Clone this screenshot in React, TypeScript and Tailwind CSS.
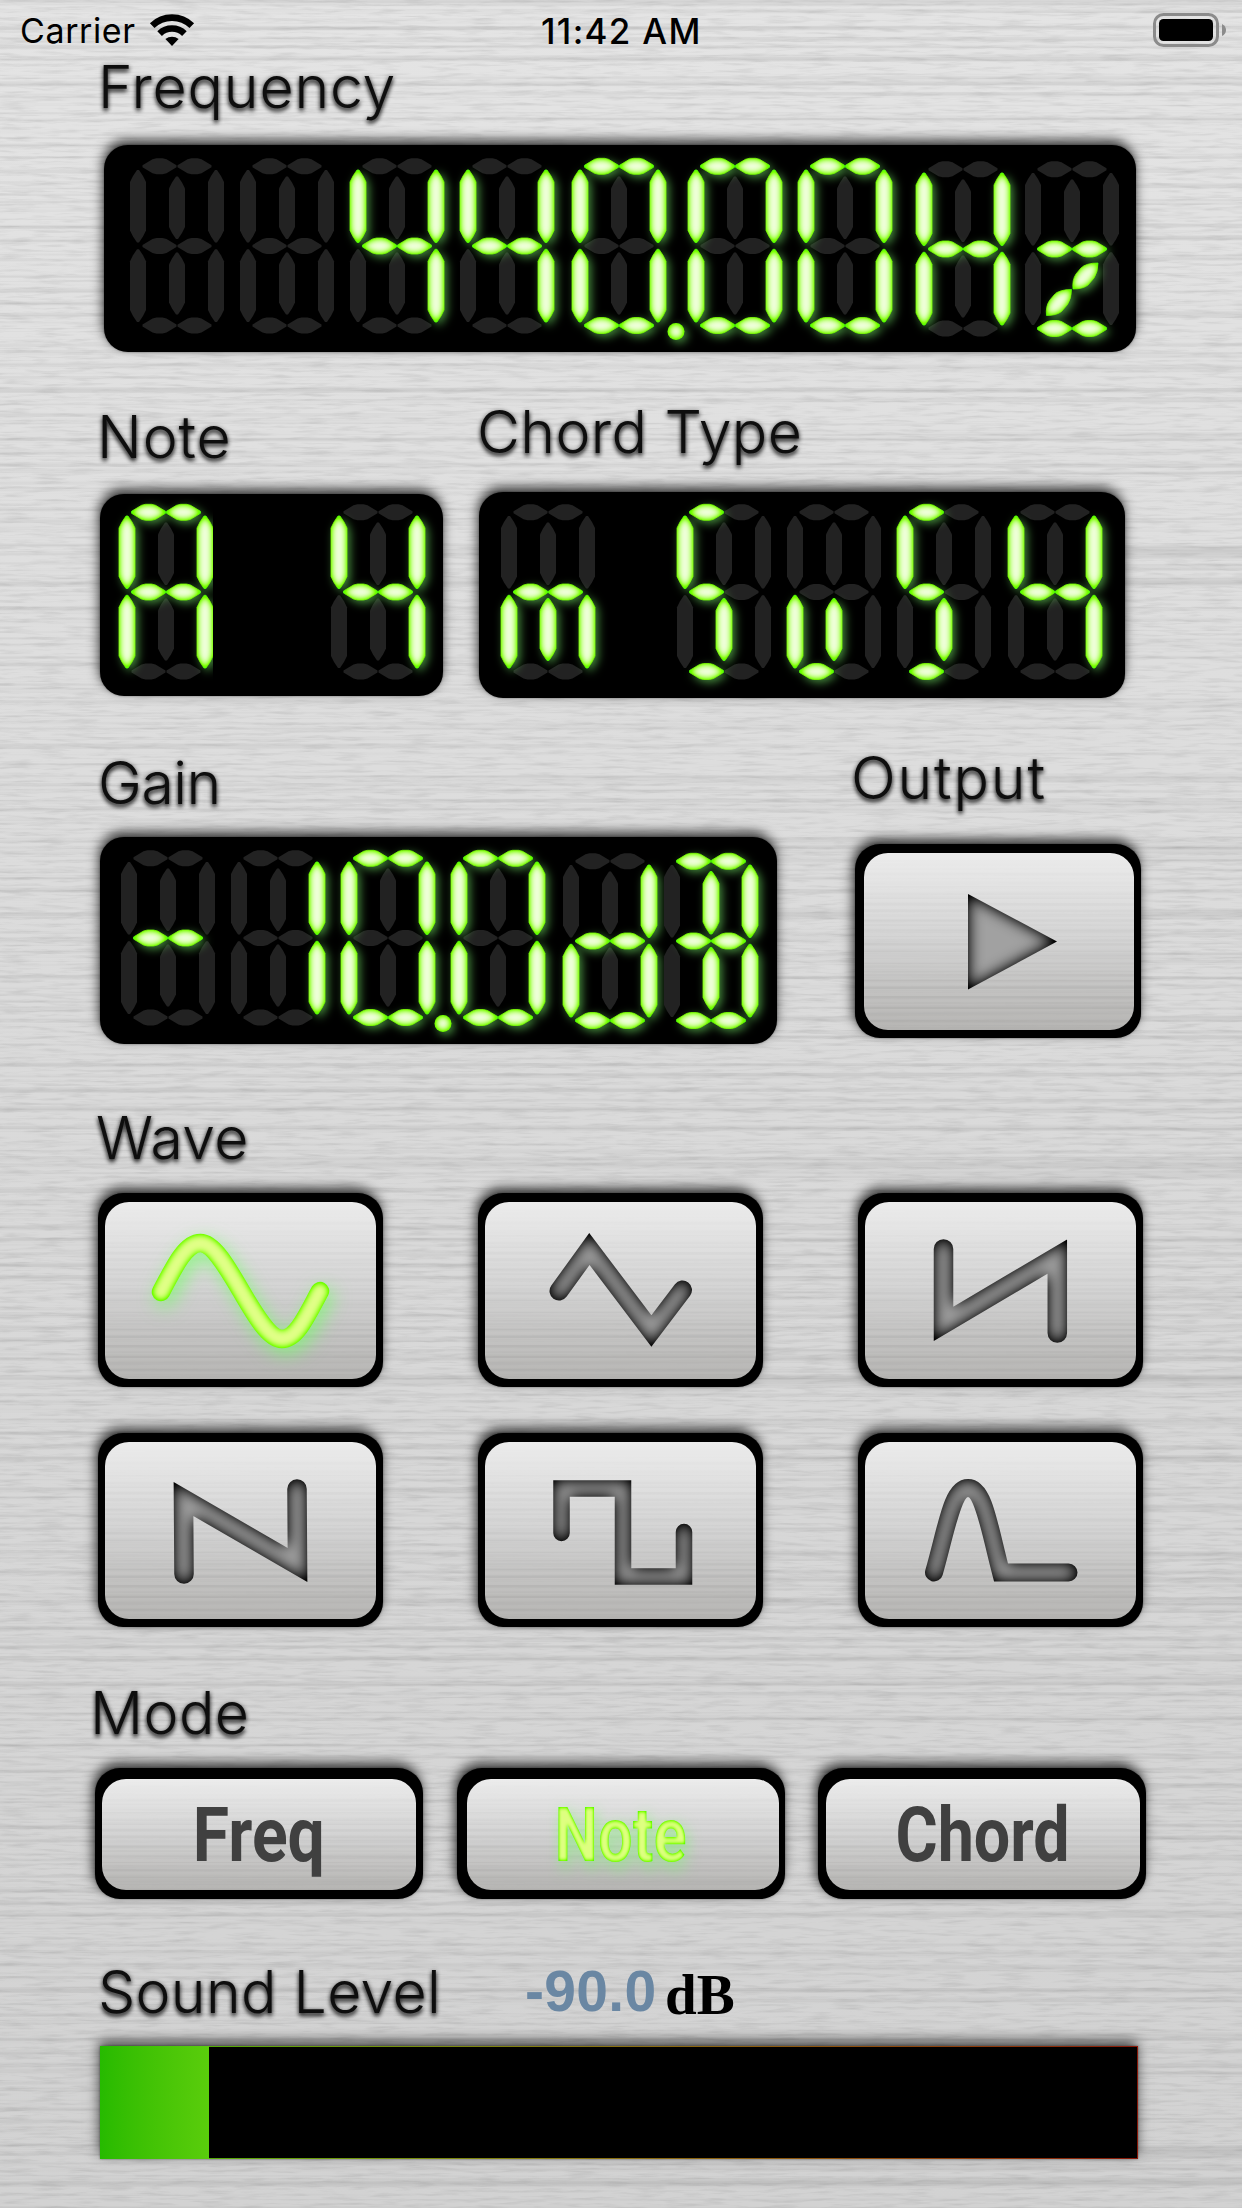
import React from "react";

type Seg =
  | "a1" | "a2" | "f" | "b" | "i" | "g1" | "g2" | "e" | "c" | "l" | "d1" | "d2" | "z1" | "z2";

const vert = (cx: number, y0: number, y1: number) =>
  `M${cx - 1} ${y0} L${cx + 1} ${y0} L${cx + 5} ${y0 + 6} L${cx + 8} ${y0 + 12} L${cx + 8} ${y1 - 12} L${cx + 5} ${y1 - 6} L${cx + 1} ${y1} L${cx - 1} ${y1} L${cx - 5} ${y1 - 6} L${cx - 8} ${y1 - 12} L${cx - 8} ${y0 + 12} L${cx - 5} ${y0 + 6} Z`;

const horiz = (x0: number, cy: number) =>
  `M${x0} ${cy - 1} L${x0 + 10} ${cy - 7} L${x0 + 14} ${cy - 8} L${x0 + 20} ${cy - 8} L${x0 + 24} ${cy - 7} L${x0 + 34} ${cy - 1} L${x0 + 34} ${cy + 1} L${x0 + 24} ${cy + 7} L${x0 + 20} ${cy + 8} L${x0 + 14} ${cy + 8} L${x0 + 10} ${cy + 7} L${x0} ${cy + 1} Z`;

const diag = (x: number, y: number) =>
  `M${x} ${y} Q${x - 1} ${y - 9} ${x + 3} ${y - 15} L${x + 8} ${y - 21} Q${x + 13} ${y - 26} ${x + 25} ${y - 26} Q${x + 25} ${y - 17} ${x + 21} ${y - 11} L${x + 15} ${y - 4} Q${x + 10} ${y} ${x} ${y} Z`;

const SHAPES: Record<Seg, string> = {
  a1: horiz(12.5, 8.3),
  a2: horiz(47.5, 8.3),
  f: vert(8, 12, 84.5),
  b: vert(86, 12, 84.5),
  i: vert(47, 18.5, 81),
  g1: horiz(12.5, 88),
  g2: horiz(47.5, 88),
  e: vert(8, 91.3, 164),
  c: vert(86, 91.3, 164),
  l: vert(47, 94.5, 156.5),
  d1: horiz(12.5, 167.5),
  d2: horiz(47.5, 167.5),
  z1: diag(48, 128),
  z2: diag(21.5, 154.5),
};

const GHOST: Seg[] = ["a1", "a2", "f", "b", "i", "g1", "g2", "e", "c", "l", "d1", "d2"];

const GLYPHS: Record<string, Seg[]> = {
  " ": [],
  "-": ["g1", "g2"],
  "0": ["a1", "a2", "f", "b", "e", "c", "d1", "d2"],
  "1": ["b", "c"],
  "4": ["f", "b", "g1", "g2", "c"],
  A: ["a1", "a2", "f", "b", "g1", "g2", "e", "c"],
  B: ["a1", "a2", "i", "b", "g1", "g2", "l", "c", "d1", "d2"],
  H: ["f", "b", "g1", "g2", "e", "c"],
  S: ["a1", "f", "g1", "l", "d1"],
  d: ["b", "g1", "g2", "e", "c", "d1", "d2"],
  m: ["g1", "g2", "e", "l", "c"],
  u: ["e", "l", "d1"],
  z: ["g1", "g2", "z1", "z2", "d1", "d2"],
};

function Digit({ ch, className = "", dot, clip = false }: { ch: string; className?: string; dot?: number; clip?: boolean }) {
  const lit = GLYPHS[ch];
  const ghost = ch === "z" ? GHOST.filter((s) => s !== "l") : GHOST;
  return (
    <svg
      width="94"
      height="176"
      viewBox="0 0 94 176"
      className={`shrink-0 ${clip ? "[clip-path:inset(-20px_0_-20px_-20px)]" : ""} ${className}`}
      overflow="visible"
    >
      <g fill="#222222">
        {ghost.filter((s) => !lit.includes(s)).map((s) => (
          <path key={s} d={SHAPES[s]} />
        ))}
      </g>
      <g filter="url(#glow)">
        {lit.map((s) => (
          <path key={s} d={SHAPES[s]} />
        ))}
        {dot && <circle cx={dot} cy="173.4" r="8.5" />}
      </g>
      {lit.map((s) => (
        <path key={s} d={SHAPES[s]} filter="url(#led)" stroke="#000" strokeWidth="0.8" strokeLinejoin="round" />
      ))}
      {dot && <circle cx={dot} cy="173.4" r="8.5" filter="url(#led)" />}
    </svg>
  );
}

function Filters() {
  return (
    <svg className="absolute size-0" aria-hidden="true">
      <defs>
        <filter id="led" filterUnits="userSpaceOnUse" x="-30" y="-30" width="170" height="240" colorInterpolationFilters="sRGB">
          <feGaussianBlur in="SourceAlpha" stdDeviation="3.8" />
          <feColorMatrix values="0 0 0 0.9 0.04  0 0 0 0 1  0 0 0 1.7 -0.84  0 0 0 0 1" />
          <feComposite in2="SourceAlpha" operator="in" />
        </filter>
        <filter id="glow" filterUnits="userSpaceOnUse" x="-40" y="-40" width="190" height="260" colorInterpolationFilters="sRGB">
          <feGaussianBlur in="SourceAlpha" stdDeviation="5" />
          <feOffset dx="3" dy="3" />
          <feColorMatrix values="0 0 0 0 0.45  0 0 0 0 0.9  0 0 0 0 0.4  0 0 0 0.62 0" />
        </filter>
        <filter id="engrave" filterUnits="userSpaceOnUse" x="-20" y="-20" width="320" height="220" colorInterpolationFilters="sRGB">
          <feGaussianBlur in="SourceAlpha" stdDeviation="7.5" />
          <feColorMatrix values="0 0 0 0.8 -0.17  0 0 0 0.8 -0.17  0 0 0 0.8 -0.17  0 0 0 0 1" />
          <feComposite in2="SourceAlpha" operator="in" />
        </filter>
        <filter id="wavelit" filterUnits="userSpaceOnUse" x="-20" y="-20" width="320" height="220" colorInterpolationFilters="sRGB">
          <feGaussianBlur in="SourceAlpha" stdDeviation="3.5" />
          <feColorMatrix values="0 0 0 0.85 0.03  0 0 0 0 1  0 0 0 1.1 -0.57  0 0 0 0 1" />
          <feComposite in2="SourceAlpha" operator="in" result="body" />
          <feGaussianBlur in="SourceAlpha" stdDeviation="9" />
          <feOffset dx="4" dy="6" />
          <feColorMatrix values="0 0 0 0 0.45  0 0 0 0 1  0 0 0 0 0.4  0 0 0 0.7 0" result="halo" />
          <feMerge>
            <feMergeNode in="halo" />
            <feMergeNode in="body" />
          </feMerge>
        </filter>
        <filter id="textlit" x="-30%" y="-30%" width="160%" height="160%" colorInterpolationFilters="sRGB">
          <feGaussianBlur in="SourceAlpha" stdDeviation="2" />
          <feColorMatrix values="0 0 0 0.85 0.02  0 0 0 0 1  0 0 0 1.1 -0.6  0 0 0 0 1" />
          <feComposite in2="SourceAlpha" operator="in" result="body" />
          <feGaussianBlur in="SourceAlpha" stdDeviation="8" />
          <feOffset dx="4" dy="6" />
          <feColorMatrix values="0 0 0 0 0.45  0 0 0 0 1  0 0 0 0 0.4  0 0 0 0.6 0" result="halo" />
          <feMerge>
            <feMergeNode in="halo" />
            <feMergeNode in="body" />
          </feMerge>
        </filter>
        <filter id="brushed" x="0" y="0" width="100%" height="100%" colorInterpolationFilters="sRGB">
          <feTurbulence type="fractalNoise" baseFrequency="0.0003 0.16" numOctaves="3" seed="11" />
          <feColorMatrix values="0 0 0 0 0.3  0 0 0 0 0.3  0 0 0 0 0.3  0.4 0 0 0 -0.19" />
        </filter>
        <filter id="grain" x="0" y="0" width="100%" height="100%" colorInterpolationFilters="sRGB">
          <feTurbulence type="fractalNoise" baseFrequency="0.03 0.3" numOctaves="3" seed="5" />
          <feColorMatrix values="0 0 0 0 0.3  0 0 0 0 0.3  0 0 0 0 0.3  0.28 0 0 0 -0.13" />
        </filter>
        <filter id="brushedFine" x="0" y="0" width="100%" height="100%" colorInterpolationFilters="sRGB">
          <feTurbulence type="fractalNoise" baseFrequency="0.0005 0.3" numOctaves="2" seed="3" />
          <feColorMatrix values="0 0 0 0 0.3  0 0 0 0 0.3  0 0 0 0 0.3  0.3 0 0 0 -0.13" />
        </filter>
      </defs>
    </svg>
  );
}

function Label({ children, className = "" }: { children: React.ReactNode; className?: string }) {
  return (
    <div
      className={`h-[72px] whitespace-nowrap pt-[1px] font-['Inter',sans-serif] text-[59px] font-light leading-[72px] text-[#0e0e0e] [text-shadow:0_3px_4px_rgba(0,0,0,0.75),0_1px_5px_rgba(0,0,0,0.45)] ${className}`}
    >
      {children}
    </div>
  );
}

function Panel({ children, className = "" }: { children: React.ReactNode; className?: string }) {
  return (
    <div className={`flex rounded-[24px] bg-black shadow-[-1px_-5px_12px_rgba(0,0,0,0.75),0_0_2px_rgba(0,0,0,0.4)] ${className}`}>
      {children}
    </div>
  );
}

function Key({ children, className = "" }: { children: React.ReactNode; className?: string }) {
  return (
    <button className={`flex shrink-0 rounded-[25px] bg-black shadow-[-2px_-5px_12px_rgba(0,0,0,0.75),0_0_2px_rgba(0,0,0,0.4)] ${className}`}>
      <span className="relative flex size-full items-center justify-center overflow-hidden rounded-[24px] bg-linear-to-b from-[#ececec] via-[#d3d3d3] to-[#b6b5b3]">
        <svg className="absolute inset-0 size-full [mask-image:linear-gradient(transparent,black_70%)]">
          <rect width="100%" height="100%" filter="url(#brushedFine)" />
        </svg>
        {children}
      </span>
    </button>
  );
}

function Wave({ d, width, lit = false }: { d: string; width: number; lit?: boolean }) {
  return (
    <svg viewBox="0 0 271 178" width="271" height="178" className="relative shrink-0">
      <path
        d={d}
        fill="none"
        stroke="#000"
        strokeWidth={width}
        strokeLinecap="round"
        strokeMiterlimit="10"
        filter={lit ? "url(#wavelit)" : "url(#engrave)"}
      />
    </svg>
  );
}

function WaveKey(props: { d: string; width: number; lit?: boolean }) {
  return (
    <Key className="h-[194px] w-[285px] px-[7px] pt-[9px] pb-[8px]">
      <Wave {...props} />
    </Key>
  );
}

function ModeText({ children, className = "" }: { children: React.ReactNode; className?: string }) {
  return (
    <span className={`relative font-['Roboto',sans-serif] text-[76px] font-bold leading-[90px] ${className}`}>
      {children}
    </span>
  );
}

export default function App() {
  return (
    <div className="relative isolate flex h-[2208px] w-[1242px] flex-col overflow-hidden bg-linear-to-b from-[#e4e4e4] via-[#dadada] to-[#d2d2d2]">
      <Filters />
      <svg className="absolute inset-0 -z-10 size-full">
        <rect width="100%" height="100%" filter="url(#brushed)" />
        <rect width="100%" height="100%" filter="url(#grain)" />
      </svg>

      <header className="flex h-[50px] shrink-0 items-start font-['Inter',sans-serif] text-[34px] leading-[42px] text-black">
        <div className="mt-[10px] flex w-[541px] pl-[20px]">
          <span className="tracking-[0.6px]">Carrier</span>
          <svg width="46" height="40" viewBox="0 0 46 40" className="ml-[13px] mt-[3px]">
            <g fill="none" stroke="#000" strokeWidth="6.6">
              <path d="M3.2 12.6 A28.5 28.5 0 0 1 42.8 12.6" />
              <path d="M10.6 20.6 A17.8 17.8 0 0 1 35.4 20.6" />
            </g>
            <path d="M16.4 26 A10.5 10.5 0 0 1 29.6 26 L23 33 Z" fill="#000" />
          </svg>
        </div>
        <span className="mt-[10px] w-[160px] whitespace-nowrap text-[35px] font-medium tracking-[1.3px]">11:42 AM</span>
        <svg width="76" height="42" viewBox="0 0 76 42" className="ml-[451px] mt-[12px]">
          <rect x="2.5" y="2.5" width="63" height="31" rx="9" fill="none" stroke="#8b8b8b" strokeWidth="3" />
          <rect x="7" y="7" width="54" height="22" rx="4.5" fill="#000" />
          <path d="M70 12 Q74 14 74 18 Q74 22 70 24 Z" fill="#8b8b8b" />
        </svg>
      </header>

      <section className="h-[302px] shrink-0">
        <Label className="ml-[98px] tracking-[0.8px]">Frequency</Label>
        <Panel className="mt-[23px] ml-[104px] h-[207px] w-[1032px] pt-[13px] pl-[26px]">
          <Digit ch=" " />
          <Digit ch=" " className="ml-[16px]" />
          <Digit ch="4" className="ml-[16px]" />
          <Digit ch="4" className="ml-[16px]" />
          <Digit ch="0" className="ml-[18px]" dot={104} />
          <Digit ch="0" className="ml-[22px]" />
          <Digit ch="0" className="ml-[16px]" />
          <Digit ch="H" className="ml-[24px] mt-[3px]" />
          <Digit ch="z" className="ml-[15px] mt-[3px]" />
        </Panel>
      </section>

      <section className="flex h-[388px] shrink-0 pl-[100px]">
        <div className="w-[343px] pt-[48px]">
          <Label className="-ml-[3px] tracking-[0.9px]">Note</Label>
          <Panel className="mt-[22px] h-[202px] pt-[10px] pl-[19px]">
            <Digit ch="A" clip />
            <Digit ch="4" className="ml-[118px]" />
          </Panel>
        </div>
        <div className="ml-[36px] w-[646px] pt-[43px]">
          <Label className="-ml-[2px] tracking-[0.4px]">Chord Type</Label>
          <Panel className="mt-[25px] h-[206px] pt-[12px] pl-[22px]">
            <Digit ch="m" />
            <Digit ch="S" className="ml-[82px]" />
            <Digit ch="u" className="ml-[16px]" />
            <Digit ch="S" className="ml-[16px]" />
            <Digit ch="4" className="ml-[17px]" />
          </Panel>
        </div>
      </section>

      <section className="flex h-[361px] shrink-0 pl-[100px]">
        <div className="w-[677px] pt-[6px]">
          <Label className="-ml-[2px] tracking-[-0.5px]">Gain</Label>
          <Panel className="mt-[19px] h-[207px] pt-[13px] pl-[21px]">
            <Digit ch="-" />
            <Digit ch="1" className="ml-[16px]" />
            <Digit ch="0" className="ml-[16px]" dot={102} />
            <Digit ch="0" className="ml-[16px]" />
            <Digit ch="d" className="ml-[18px] mt-[3px]" />
            <Digit ch="B" className="ml-[7px] mt-[3px]" />
          </Panel>
        </div>
        <div className="ml-[78px] w-[286px] pt-[1px]">
          <Label className="-ml-[4px] tracking-[1.8px]">Output</Label>
          <Key className="mt-[31px] h-[194px] w-[286px] pt-[9px] pr-[7px] pb-[8px] pl-[9px]">
            <svg viewBox="0 0 270 178" width="270" height="178" className="relative shrink-0">
              <path d="M104 41 L193 88.5 L104 136.5 Z" filter="url(#engrave)" />
            </svg>
          </Key>
        </div>
      </section>

      <section className="shrink-0 pl-[98px]">
        <Label className="-ml-[2px] tracking-[0.4px]">Wave</Label>
        <div className="mt-[20px] grid w-[1045px] grid-cols-[285px_285px_285px] justify-between gap-y-[46px]">
          <WaveKey lit width={18.5} d="M56 90 C70 63 81 41 95.5 41 C121 41 151 137 177 137 C192 137 203 111 215 89" />
          <WaveKey width={19} d="M74 89 L104.4 47 L166.4 129 L197.5 88" />
          <WaveKey width={19.5} d="M78.5 47 V122 L192.3 54.5 V131" />
          <WaveKey width={19.5} d="M79 132 L78.5 57 L192.5 123 L192 47" />
          <WaveKey width={16.5} d="M76.5 91 V46.5 H138 V134.5 H199 V90" />
          <WaveKey width={18} d="M69 130.5 C82 85 87 46 103 46 C119 46 124 85 136 130.5 H203.5" />
        </div>
      </section>

      <section className="mt-[49px] shrink-0">
        <Label className="ml-[90px] tracking-[0.4px]">Mode</Label>
        <div className="mt-[20px] ml-[95px] flex w-[1051px] justify-between">
          <Key className="h-[131px] w-[328px] px-[7px] pt-[11px] pb-[9px]">
            <ModeText className="scale-x-[0.87] text-[#404040]">Freq</ModeText>
          </Key>
          <Key className="h-[131px] w-[328px] pt-[11px] pr-[6px] pb-[9px] pl-[10px]">
            <ModeText className="-left-[2px] scale-x-[0.81] text-black [filter:url(#textlit)]">Note</ModeText>
          </Key>
          <Key className="h-[131px] w-[328px] pt-[11px] pr-[6px] pb-[9px] pl-[8px]">
            <ModeText className="scale-x-[0.85] text-[#404040]">Chord</ModeText>
          </Key>
        </div>
      </section>

      <section className="mt-[56px] shrink-0 pl-[100px]">
        <div className="flex h-[72px]">
          <Label className="-ml-[2px] w-[427px] tracking-[0.3px]">Sound Level</Label>
          <span className="w-[140px] whitespace-nowrap font-['Liberation_Sans',sans-serif] text-[57px] font-bold leading-[72px] tracking-[0.3px] text-[#6a87a3]">
            -90.0
          </span>
          <span className="pt-[2px] font-['Liberation_Serif',serif] text-[57px] font-bold leading-[76px] text-black">dB</span>
        </div>
        <div className="mt-[19px] flex h-[113px] w-[1038px] bg-linear-to-r from-[#28ba00] via-[#8a7010] to-[#8a1808] py-px pr-px shadow-[-1px_-5px_12px_rgba(0,0,0,0.65),0_0_2px_rgba(0,0,0,0.4)]">
          <div className="-my-px h-[113px] w-[109px] bg-linear-to-r from-[#26ba00] to-[#5acd0c]" />
          <div className="h-full grow bg-black" />
        </div>
      </section>
    </div>
  );
}
